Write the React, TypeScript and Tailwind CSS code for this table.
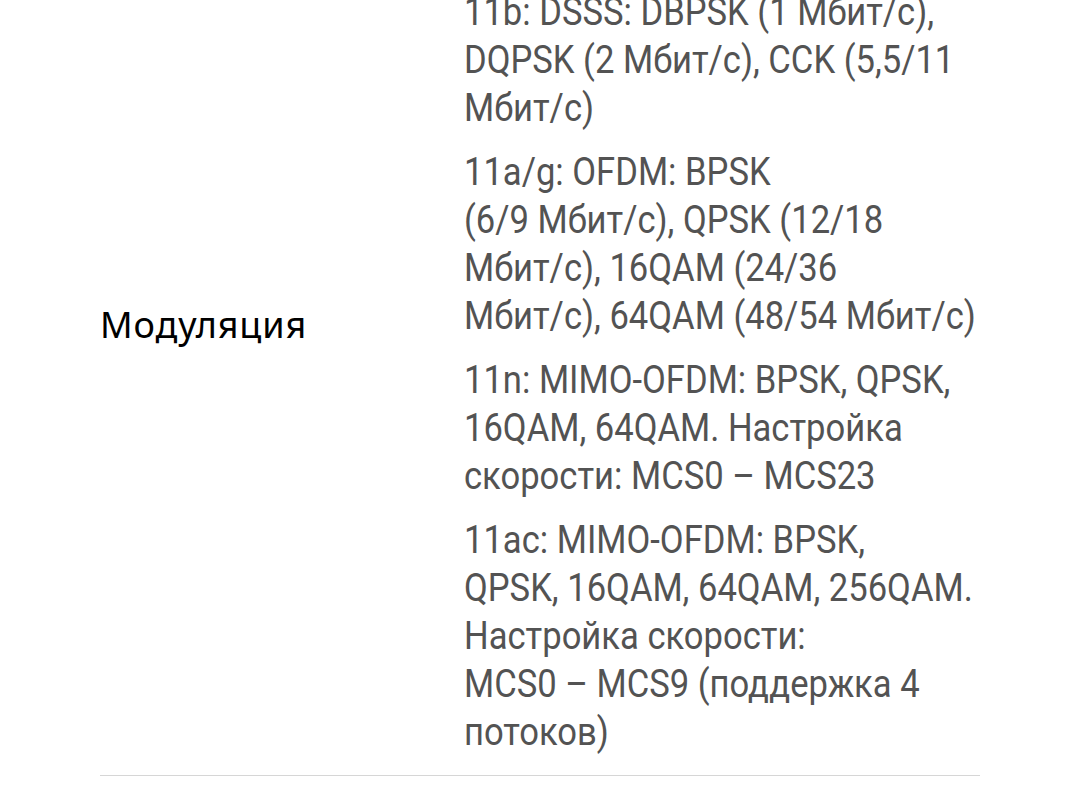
export default function App() {
  const blocks: string[][] = [
    ["11b: DSSS: DBPSK (1 Мбит/с),", "DQPSK (2 Мбит/с), CCK (5,5/11", "Мбит/с)"],
    [
      "11a/g: OFDM: BPSK",
      "(6/9 Мбит/с), QPSK (12/18",
      "Мбит/с), 16QAM (24/36",
      "Мбит/с), 64QAM (48/54 Мбит/с)",
    ],
    ["11n: MIMO-OFDM: BPSK, QPSK,", "16QAM, 64QAM. Настройка", "скорости: MCS0 – MCS23"],
    [
      "11ac: MIMO-OFDM: BPSK,",
      "QPSK, 16QAM, 64QAM, 256QAM.",
      "Настройка скорости:",
      "MCS0 – MCS9 (поддержка 4",
      "потоков)",
    ],
  ];

  return (
    <div className="w-[1080px] h-[810px] overflow-hidden bg-white">
      {/* spec row, page scrolled so the top of the row is cut off */}
      <div className="mx-[100px] -mt-[32px] flex border-b border-[#d6d6d6] pt-[20px] pb-[19px]">
        <div className="w-[364px] shrink-0 pt-[313px]">
          <span className="block text-[36px] leading-[48px] tracking-[0.9px] text-black font-['Noto_Sans',sans-serif]">
            Модуляция
          </span>
        </div>
        <div className="flex flex-col gap-[16px] text-[38px] leading-[48px] text-[#535353] font-['Roboto',sans-serif] origin-left scale-x-[0.91]">
          {blocks.map((lines, i) => (
            <p key={i} className="whitespace-nowrap">
              {lines.map((l, j) => (
                <span key={j}>
                  {l}
                  {j < lines.length - 1 && <br />}
                </span>
              ))}
            </p>
          ))}
        </div>
      </div>
    </div>
  );
}
